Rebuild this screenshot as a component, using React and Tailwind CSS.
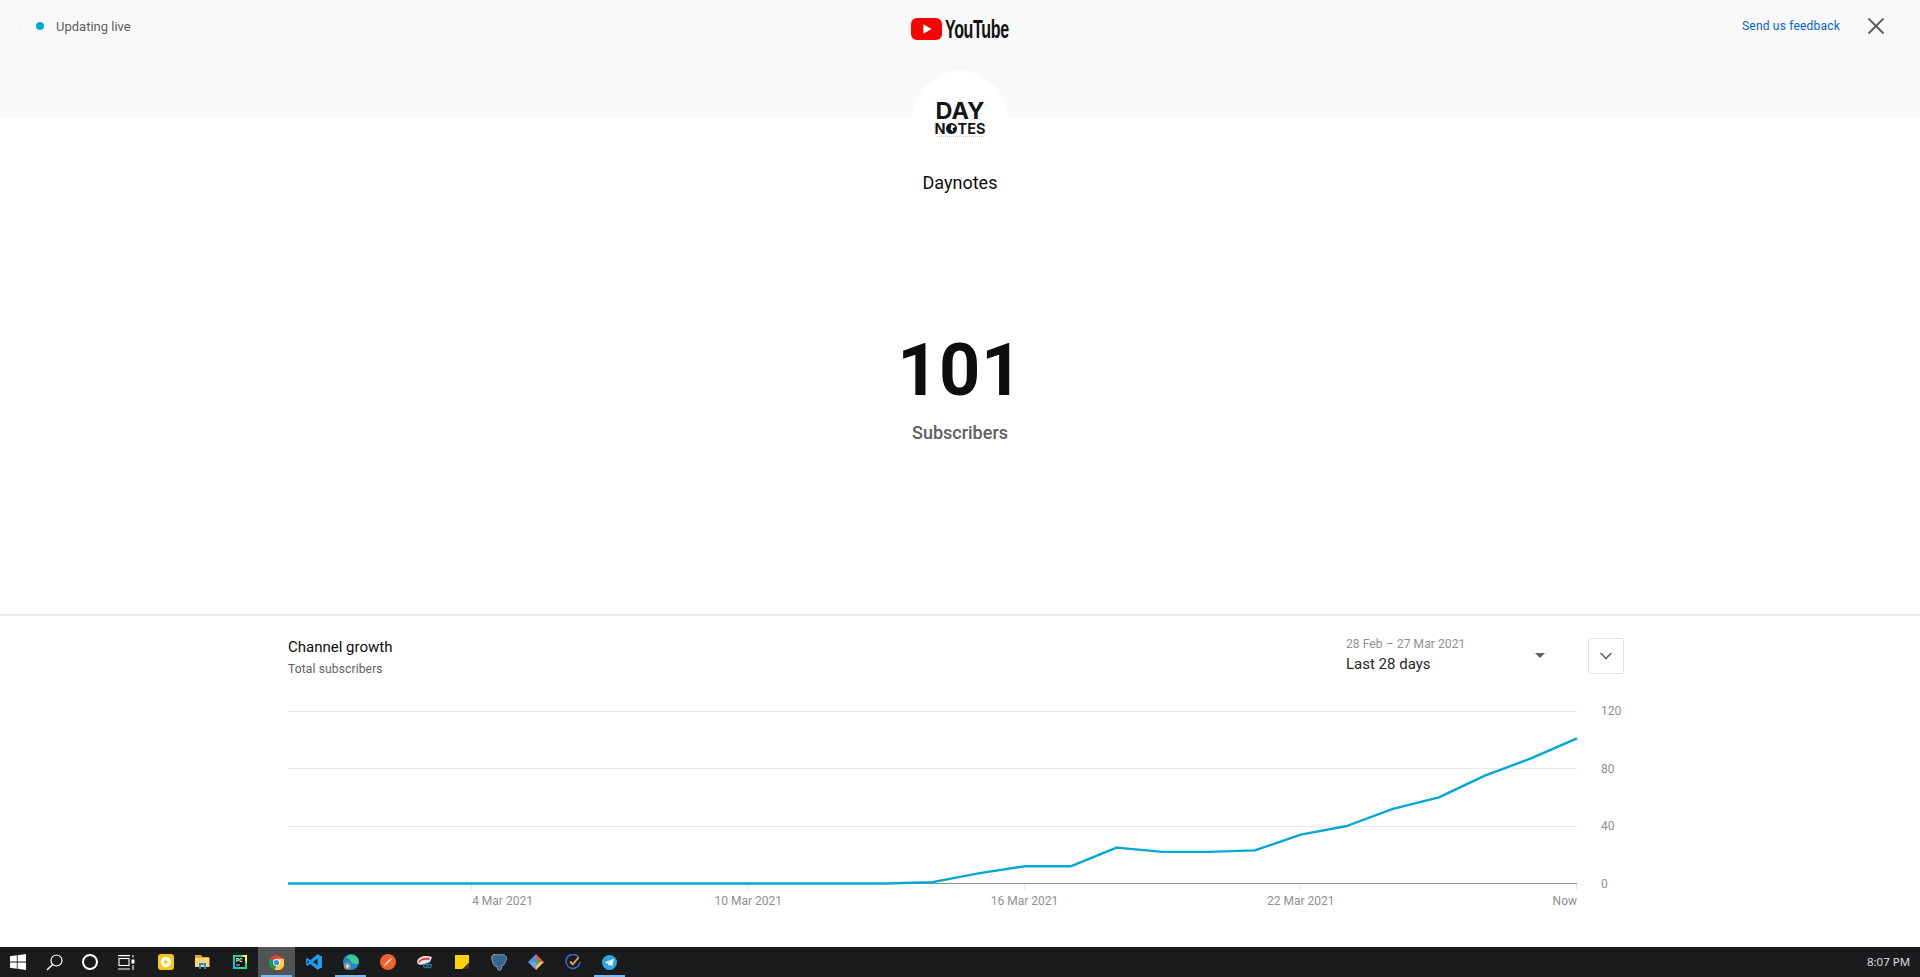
import React from 'react';
import { X, ChevronDown } from 'lucide-react';

const roboto = { fontFamily: 'Roboto, sans-serif' };

const values = [0, 0, 0, 0, 0, 0, 0, 0, 0, 0, 0, 0, 0, 0, 1, 7, 12, 12, 25, 22, 22, 23, 34, 40, 52, 60, 75, 87, 101];
const plotLeft = 0;
const plotWidth = 1289;
const plotBottom = 183.5;
const unit = 172.5 / 120;
const xAt = (i) => plotLeft + (i * plotWidth) / 28;
const yAt = (v) => plotBottom - v * unit;
const linePoints = values.map((v, i) => `${xAt(i).toFixed(1)},${yAt(v).toFixed(1)}`).join(' ');

const xTicks = [
  [4, '4 Mar 2021', 'start'],
  [10, '10 Mar 2021', 'middle'],
  [16, '16 Mar 2021', 'middle'],
  [22, '22 Mar 2021', 'middle'],
  [28, 'Now', 'end']
];

function YouTubeLogo() {
  return (
    <div className="flex items-center h-[22px] -ml-[1px]">
      <svg width="31" height="22" viewBox="0 0 31 22">
        <rect x="0" y="0" width="31" height="22" rx="6" fill="#ff0000" />
        <path d="M12.4 6.3 L20.6 11 L12.4 15.7 Z" fill="#fff" />
      </svg>
      <span className="ml-[3px] w-[63px] text-[25px] leading-[22px] font-bold text-[#111] tracking-[-0.5px] origin-left scale-x-[0.64] whitespace-nowrap font-['Liberation_Sans',sans-serif]">
        YouTube
      </span>
    </div>
  );
}

function AvatarLogo() {
  return (
    <div className="absolute left-1/2 top-[71px] -translate-x-1/2 w-[96px] h-[96px] rounded-full bg-white flex flex-col items-center pt-[30px]">
      <div className="text-[23px] leading-[21px] font-bold text-[#16161a] font-['Inter',sans-serif] scale-x-[1.02]">DAY</div>
      <div className="flex items-center text-[14.5px] leading-[13px] font-bold text-[#16161a] font-['Inter',sans-serif]">
        <span>N</span>
        <svg width="11" height="11" viewBox="0 0 11 11" className="mx-[0.5px]">
          <circle cx="5.5" cy="5.5" r="5.5" fill="#16161a" />
          <path d="M5.5 1.5 L9.5 3.5 L6.5 5.5 L7.5 9 L4.5 6.5 Z" fill="#fff" />
        </svg>
        <span>TES</span>
      </div>
      <div className="mt-[1px] w-[47px] border-t border-dotted border-[#c8c8c8]" />
    </div>
  );
}

function TaskButton({ active, open, children }) {
  return (
    <div className={`relative w-[37px] h-full flex items-center justify-center ${active ? 'bg-[#515355]' : ''}`}>
      {children}
      {(active || open) && <div className="absolute left-[3px] right-[3px] bottom-0 h-[2px] bg-[#76b9ed]" />}
    </div>
  );
}

function Taskbar() {
  return (
    <footer className="h-[30px] bg-[#191b1d] flex items-stretch shrink-0">
      <div className="w-[36px] flex items-center justify-center">
        <svg width="16" height="16" viewBox="0 0 16 16" fill="#fff">
          <path d="M0 2.3 L6.8 1.3 V7.6 H0 Z M7.6 1.2 L16 0 V7.6 H7.6 Z M0 8.4 H6.8 V14.7 L0 13.7 Z M7.6 8.4 H16 V16 L7.6 14.8 Z" />
        </svg>
      </div>
      <div className="w-[36px] flex items-center justify-center">
        <svg width="17" height="17" viewBox="0 0 17 17" fill="none" stroke="#fff" strokeWidth="1.2">
          <circle cx="10.5" cy="6.5" r="5.5" />
          <path d="M6.6 10.4 L1 16" strokeWidth="1.4" />
        </svg>
      </div>
      <div className="w-[36px] flex items-center justify-center">
        <div className="w-[16px] h-[16px] rounded-full border-[2.5px] border-white" />
      </div>
      <div className="w-[36px] flex items-center justify-center">
        <svg width="17" height="15" viewBox="0 0 17 15" fill="none" stroke="#fff" strokeWidth="1.1">
          <rect x="1" y="3.5" width="10" height="7" />
          <path d="M0 0.6 H12 M0 14 H12 M15 0 V2.5 M15 10 V15" />
          <rect x="13.5" y="4.5" width="3" height="4" fill="#fff" stroke="none" />
        </svg>
      </div>
      <div className="ml-[3px] flex items-stretch">
        <TaskButton>
          <svg width="16" height="16" viewBox="0 0 16 16">
            <rect width="16" height="16" rx="3" fill="#f6c915" />
            <circle cx="8" cy="8" r="5.2" fill="#fff" />
            <path d="M6.4 5.4 L10.8 8 L6.4 10.6 Z" fill="#f6c915" />
          </svg>
        </TaskButton>
        <TaskButton>
          <svg width="15" height="14" viewBox="0 0 15 14">
            <path d="M0 0 H6 L7.5 2 H14 V4 H0 Z" fill="#e3a92a" />
            <rect x="0" y="3" width="14.5" height="9" fill="#f8d775" />
            <path d="M4 8 H11 V14 H9 V10 H6 V14 H4 Z" fill="#2f8fd6" />
          </svg>
        </TaskButton>
        <TaskButton>
          <svg width="14" height="14" viewBox="0 0 14 14">
            <rect width="14" height="14" fill="#21d789" />
            <path d="M14 0 V9 L9 0 Z" fill="#fcf84a" />
            <path d="M0 14 V6 L6 14 Z" fill="#07c3f2" />
            <rect x="2" y="2" width="10" height="10" fill="#111" />
            <text x="3" y="7.2" fontSize="5" fontWeight="700" fill="#fff" style={roboto}>PC</text>
            <rect x="3" y="9.6" width="4" height="0.8" fill="#fff" />
          </svg>
        </TaskButton>
        <TaskButton active>
          <svg width="15" height="15" viewBox="0 0 16 16">
            <circle cx="8" cy="8" r="8" fill="#db4437" />
            <path d="M8 8 L1.1 4 A8 8 0 0 0 6 15.8 Z" fill="#0f9d58" />
            <path d="M8 4 H15.5 A8 8 0 0 1 6 15.8 L9.5 9 Z" fill="#ffcd40" />
            <circle cx="8" cy="8" r="3.7" fill="#fff" />
            <circle cx="8" cy="8" r="2.8" fill="#4285f4" />
          </svg>
        </TaskButton>
        <TaskButton>
          <svg width="16" height="16" viewBox="0 0 16 16">
            <path d="M11.5 0.3 L16 2.4 V13.6 L11.5 15.7 L4.2 9.7 L1.4 11.9 L0 11.1 V4.9 L1.4 4.1 L4.2 6.3 Z M11.5 4.8 L7 8 L11.5 11.2 Z M1.5 6 V10 L3.3 8 Z" fill="#1f9cf0" fillRule="evenodd" />
          </svg>
        </TaskButton>
        <TaskButton open>
          <svg width="16" height="16" viewBox="0 0 16 16">
            <circle cx="8" cy="8" r="8" fill="#1b86c9" />
            <path d="M3 4 A7 7 0 0 1 15.5 9.5 C13 11 8.5 10 8 7.5 C7 5 5 4 3 4 Z" fill="#39d08a" />
            <circle cx="4.5" cy="12" r="3.7" fill="#8a8f93" />
            <circle cx="4.5" cy="12" r="1.5" fill="#e8e8e8" />
          </svg>
        </TaskButton>
        <TaskButton>
          <svg width="16" height="16" viewBox="0 0 16 16">
            <circle cx="8" cy="8" r="8" fill="#f2622e" />
            <path d="M4.5 11.5 L11.5 4.5" stroke="#ffd9c4" strokeWidth="1.6" />
          </svg>
        </TaskButton>
        <TaskButton>
          <svg width="16" height="16" viewBox="0 0 16 16">
            <path d="M0 8 C1 2 9 1 15 3 L13 8 L8 10 C5 11 2 11 1 10 Z" fill="#e6e6e6" />
            <path d="M1 8 C3 4 8 3 13 4 L12 6 C8 5 4 6 2 9 Z" fill="#d8434b" />
            <circle cx="8.5" cy="12" r="1.8" fill="none" stroke="#1e88c7" strokeWidth="1.2" />
            <circle cx="12.5" cy="12" r="1.8" fill="none" stroke="#1e88c7" strokeWidth="1.2" />
          </svg>
        </TaskButton>
        <TaskButton>
          <svg width="14" height="14" viewBox="0 0 14 14">
            <rect width="14" height="14" fill="#fdd400" />
            <path d="M14 7.5 V14 H7.5 Z" fill="#3a3a32" />
          </svg>
        </TaskButton>
        <TaskButton>
          <svg width="16" height="17" viewBox="0 0 16 17">
            <path d="M3 0.5 C5 0 6.5 1 8 1 C10 0 13.5 0 15 2.5 C16.5 5 14 8 13.5 10 C13 11 11.5 12 11 11 C10.5 13 11 16 8.5 16.5 C6.5 16.5 6.5 14 6 12 C4 13 2.5 11 2 9 C1 6 -1 2 3 0.5 Z" fill="#336791" stroke="#b8c6d2" strokeWidth="0.7" />
          </svg>
        </TaskButton>
        <TaskButton>
          <svg width="16" height="16" viewBox="0 0 16 16">
            <path d="M8 0 L16 8 L8 8 Z" fill="#e2574c" />
            <path d="M16 8 L8 16 L8 8 Z" fill="#f3c747" />
            <path d="M8 16 L0 8 L8 8 Z" fill="#6ea5e8" />
            <path d="M0 8 L8 0 L8 8 Z" fill="#5b8dd6" />
            <path d="M8 4 L12 8 L8 12 Z" fill="#58a55c" />
          </svg>
        </TaskButton>
        <TaskButton>
          <svg width="16" height="16" viewBox="0 0 16 16" fill="none">
            <path d="M13.5 3 A7 7 0 1 0 15 8" stroke="#3f63c9" strokeWidth="1.6" />
            <path d="M5 7.5 L7.8 10.3 L13.5 3.5" stroke="#f5a623" strokeWidth="1.8" />
          </svg>
        </TaskButton>
        <TaskButton open>
          <svg width="15" height="15" viewBox="0 0 16 16">
            <circle cx="8" cy="8" r="8" fill="#2ca5e0" />
            <path d="M3 8 L12.5 4 L11 12 L8 10 L6.5 11.5 L6.3 9.3 L10.5 5.8 L5.2 9 Z" fill="#fff" />
          </svg>
        </TaskButton>
      </div>
      <div className="ml-auto pr-[10px] flex items-center text-[11.5px] text-[#e6e6e6] font-['Open_Sans',sans-serif]">8:07 PM</div>
    </footer>
  );
}

function GrowthChart() {
  return (
    <svg width="1336" height="212" viewBox="0 0 1336 212" className="block">
      {[120, 80, 40].map((v) => (
        <line key={v} x1="0" x2={plotWidth} y1={Math.floor(yAt(v)) + 0.5} y2={Math.floor(yAt(v)) + 0.5} stroke="#e8e8e8" />
      ))}
      <line x1="0" x2={plotWidth} y1="183.5" y2="183.5" stroke="#909090" />
      {xTicks.map(([i]) => (
        <line key={i} x1={Math.round(xAt(i)) - 0.5} x2={Math.round(xAt(i)) - 0.5} y1="184" y2="190" stroke="#e5e5e5" />
      ))}
      <polyline points={linePoints} fill="none" stroke="#00a8d4" strokeWidth="2.4" strokeLinejoin="round" />
      {xTicks.map(([i, label, anchor]) => (
        <text key={label} x={xAt(i)} y="205" textAnchor={anchor} fontSize="12" fill="#909090" style={roboto}>
          {label}
        </text>
      ))}
      {[120, 80, 40, 0].map((v) => (
        <text key={v} x="1313" y={yAt(v) + 4} fontSize="12" fill="#909090" style={roboto}>
          {v}
        </text>
      ))}
    </svg>
  );
}

export default function App() {
  return (
    <div className="h-[977px] w-full flex flex-col overflow-hidden bg-white font-['Roboto',sans-serif]">
      <header className="relative h-[118px] shrink-0 bg-[#f9f9f9] grid grid-cols-3 items-start">
        <div className="flex items-center pl-[19px] pt-[5px]">
          <div className="w-[42px] h-[42px] rounded-full border border-[#f1f6f6] flex items-center justify-center">
            <div className="w-[8px] h-[8px] rounded-full bg-[#00a8d4]" />
          </div>
          <span className="ml-[-5px] pt-[1px] text-[13px] text-[#606060]">Updating live</span>
        </div>
        <div className="flex justify-center pt-[18px]">
          <YouTubeLogo />
        </div>
        <div className="flex items-center justify-end pt-[12px] pr-[30px]">
          <span className="text-[12px] leading-[16px] text-[#065fd4] tracking-[0.2px]">Send us feedback</span>
          <X className="ml-[22px] text-[#606060]" size={28} strokeWidth={1.6} />
        </div>
        <AvatarLogo />
      </header>

      <main className="flex-1 flex flex-col items-center">
        <h1 className="pt-[54px] text-[18px] leading-[22px] text-[#0d0d0d]">Daynotes</h1>
        <div className="mt-[141px] text-[72px] leading-[72px] font-bold tracking-[0.5px] text-[#0d0d0d]">101</div>
        <div className="mt-[14px] text-[18px] leading-[24px] font-medium text-[#606060]">Subscribers</div>
      </main>

      <section className="h-[333px] shrink-0 border-t-2 border-[#e8e8e8] pl-[288px] pt-[20px]">
        <div className="w-[1336px] h-[64px] flex items-start justify-between">
          <div className="pt-[1px]">
            <div className="text-[15px] leading-[20px] text-[#0d0d0d]">Channel growth</div>
            <div className="mt-[4px] text-[12px] leading-[16px] text-[#606060] tracking-[0.15px]">Total subscribers</div>
          </div>
          <div className="flex items-start">
            <div className="w-[206px] relative pt-[1px]">
              <div className="text-[12px] leading-[14px] text-[#909090] tracking-[0.1px]">28 Feb – 27 Mar 2021</div>
              <div className="mt-[3px] text-[15px] leading-[20px] text-[#282828]">Last 28 days</div>
              <div className="absolute left-[189px] top-[17px] w-0 h-0 border-l-[5px] border-r-[5px] border-t-[5px] border-l-transparent border-r-transparent border-t-[#606060]" />
            </div>
            <button className="ml-[36px] mt-[2px] w-[36px] h-[36px] rounded-[3px] border border-[#e0e0e0] flex items-center justify-center text-[#606060]">
              <ChevronDown size={20} strokeWidth={2} />
            </button>
          </div>
        </div>
        <GrowthChart />
      </section>

      <Taskbar />
    </div>
  );
}
